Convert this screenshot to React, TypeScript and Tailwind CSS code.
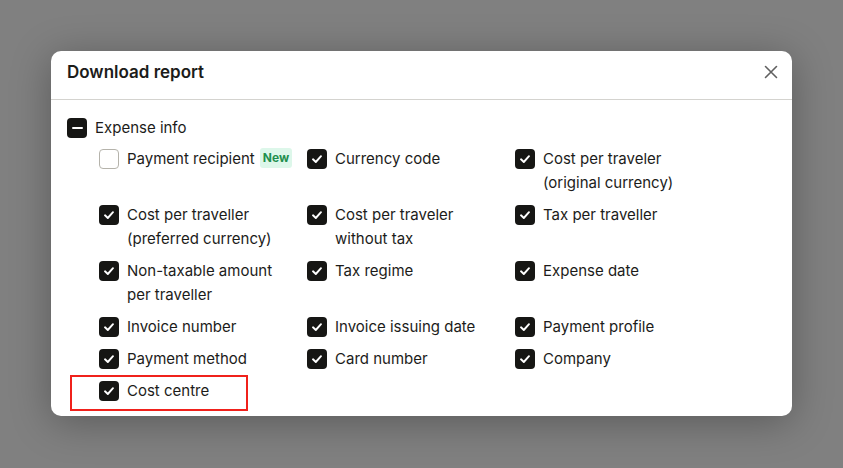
import React from "react";

function Check({ checked = true }: { checked?: boolean }) {
  if (!checked)
    return <div className="w-5 h-5 shrink-0 rounded-[4px] border border-[#b5b3ab] bg-white" />;
  return (
    <div className="w-5 h-5 shrink-0 rounded-[4px] bg-[#161614] flex items-center justify-center">
      <svg width="12" height="12" viewBox="0 0 12 12" fill="none">
        <path d="M2 6.3 L4.8 9 L10 3.2" stroke="white" strokeWidth="1.9" strokeLinecap="round" strokeLinejoin="round" />
      </svg>
    </div>
  );
}

function Item({ label, checked = true, badge }: { label: React.ReactNode; checked?: boolean; badge?: boolean }) {
  return (
    <div className="flex items-start gap-2">
      <div className="h-6 flex items-center"><Check checked={checked} /></div>
      <div className="text-[15px] leading-6 text-[#1c1c1a]">{label}</div>
      {badge && (
        <span className="ml-[-3px] mt-[1px] h-5 px-[3px] rounded-[3px] bg-[#ddf7ea] text-[#1f8f4e] text-[12px] font-bold leading-5">New</span>
      )}
    </div>
  );
}

export default function App() {
  return (
    <div
      className="w-[843px] h-[468px] bg-[#808080] flex items-start justify-center pt-[51px]"
      style={{ fontFamily: "Inter, 'Noto Sans', sans-serif" }}
    >
      <div className="relative w-[741px] h-[365px] bg-white rounded-[10px] shadow-[0_6px_40px_rgba(0,0,0,0.3)]">
        <div className="h-[49px] flex items-start justify-between pt-[9px] px-4 border-b border-[#d4d3cf]">
          <div className="text-[17px] leading-6 font-semibold text-[#1c1c1a]">Download report</div>
          <svg width="14" height="14" viewBox="0 0 14 14" className="mt-[5px] mr-[-2px]">
            <path d="M1.5 1.5 L12.5 12.5 M12.5 1.5 L1.5 12.5" stroke="#606060" strokeWidth="1.6" strokeLinecap="round" />
          </svg>
        </div>
        <div className="px-4 pt-[18px]">
          <div className="flex items-center gap-2 h-5">
            <div className="w-5 h-5 rounded-[4px] bg-[#161614] flex items-center justify-center">
              <div className="w-[11px] h-[2px] bg-white rounded" />
            </div>
            <span className="text-[15px] text-[#1c1c1a]">Expense info</span>
          </div>
          <div className="pl-8 mt-[9px] grid grid-cols-[208px_208px_208px] gap-y-2">
            <Item label="Payment recipient" checked={false} badge />
            <Item label="Currency code" />
            <Item label={<>Cost per traveler<br />(original currency)</>} />
            <Item label={<>Cost per traveller<br />(preferred currency)</>} />
            <Item label={<>Cost per traveler<br />without tax</>} />
            <Item label="Tax per traveller" />
            <Item label={<>Non-taxable amount<br />per traveller</>} />
            <Item label="Tax regime" />
            <Item label="Expense date" />
            <Item label="Invoice number" />
            <Item label="Invoice issuing date" />
            <Item label="Payment profile" />
            <Item label="Payment method" />
            <Item label="Card number" />
            <Item label="Company" />
            <Item label="Cost centre" />
          </div>
        </div>
        <div className="absolute left-[19px] top-[324px] w-[178px] h-[36px] border-2 border-[#f0211b]" />
      </div>
    </div>
  );
}
